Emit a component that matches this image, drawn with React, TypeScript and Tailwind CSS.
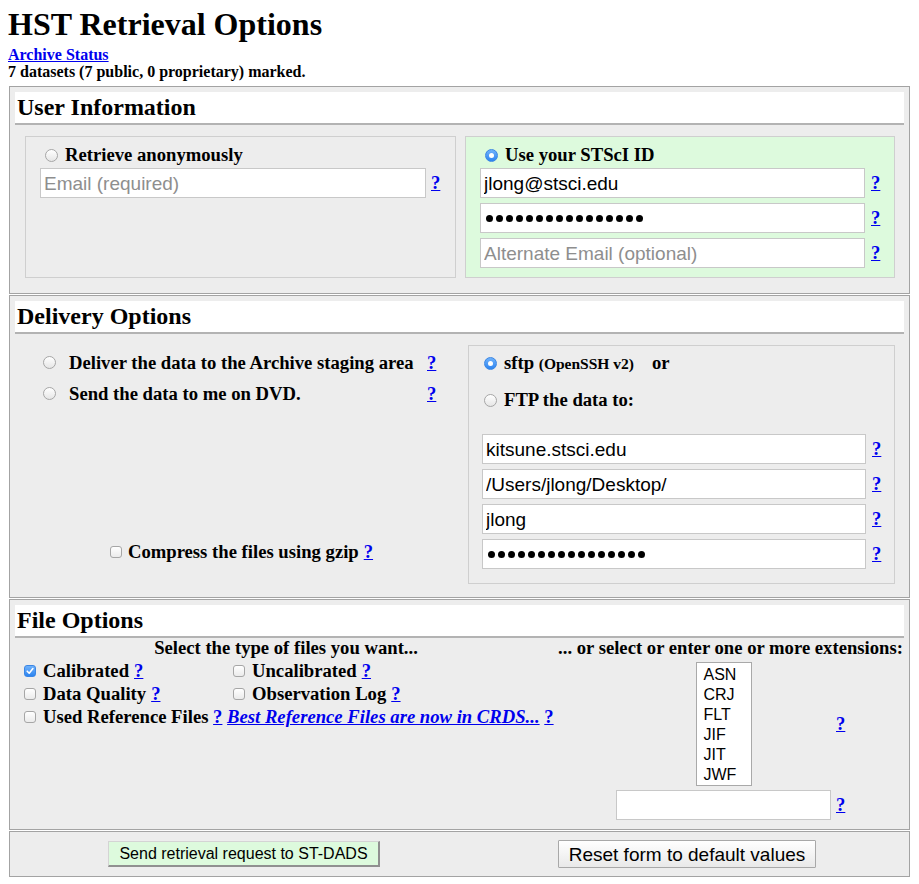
import React from "react"

const sans = "font-['Liberation_Sans',Arial,sans-serif]"

const Radio = ({ checked = false }: { checked?: boolean }) =>
  checked ? (
    <span className="inline-flex h-[13px] w-[13px] shrink-0 items-center justify-center rounded-full border border-[#3b86e4] bg-linear-to-b from-[#6fb2fb] to-[#2b84f0]">
      <span className="h-[5px] w-[5px] rounded-full bg-white" />
    </span>
  ) : (
    <span className="inline-block h-[13px] w-[13px] shrink-0 rounded-full border border-[#a6a6a6] bg-linear-to-b from-white to-[#e6e6e6]" />
  )

const Checkbox = ({ checked = false }: { checked?: boolean }) =>
  checked ? (
    <span className="inline-flex h-[12px] w-[12px] shrink-0 items-center justify-center rounded-[3px] border border-[#3b86e4] bg-linear-to-b from-[#6fb2fb] to-[#2b84f0]">
      <svg width="10" height="10" viewBox="0 0 10 10">
        <path d="M2.2 5.2 L4.2 7.2 L7.9 2.6" fill="none" stroke="white" strokeWidth="1.6" strokeLinecap="round" strokeLinejoin="round" />
      </svg>
    </span>
  ) : (
    <span className="inline-block h-[12px] w-[12px] shrink-0 rounded-[3px] border border-[#a6a6a6] bg-linear-to-b from-white to-[#ebebeb]" />
  )

const Help = ({ className = "" }: { className?: string }) => (
  <a href="#" className={`text-[18.67px] font-bold text-[#0000ee] underline ${className}`}>
    ?
  </a>
)

const TextBox = ({ value = "", placeholder = "", width }: { value?: string; placeholder?: string; width: string }) => (
  <input
    readOnly
    value={value}
    placeholder={placeholder}
    className={`h-[30px] ${width} border border-[#c8c8c8] bg-white px-[3px] pt-[2px] ${sans} text-[19px] text-black outline-none placeholder:text-[#8e8e8e]`}
  />
)

const Password = ({ width }: { width: string }) => (
  <div className={`flex h-[30px] ${width} items-center gap-[3px] border border-[#c8c8c8] bg-white pl-[5px]`}>
    {Array.from({ length: 16 }).map((_, i) => (
      <span key={i} className="h-[7px] w-[7px] rounded-full bg-black" />
    ))}
  </div>
)

const Section = ({ title, children }: { title: string; children: React.ReactNode }) => (
  <div className="border border-[#a3a3a3] bg-[#ededed] px-[5px] pt-[5px]">
    <div className="h-[33px] border-b-2 border-[#b3b3b3] bg-white pl-[2px] text-[24px] font-bold leading-[31px]">{title}</div>
    {children}
  </div>
)

const label = "text-[18.67px] font-bold leading-[24px]"

export default function App() {
  const extensions = ["ASN", "CRJ", "FLT", "JIF", "JIT", "JWF"]

  return (
    <div className="min-h-screen bg-white font-['Liberation_Serif',serif] text-black">
      <h1 className="ml-[8px] pt-[6px] text-[32px] font-bold leading-[36px]">HST Retrieval Options</h1>
      <div className="ml-[8px] mt-[4px] text-[16px] font-bold leading-[17px]">
        <a href="#" className="text-[#0000ee] underline">
          Archive Status
        </a>
        <div>7 datasets (7 public, 0 proprietary) marked.</div>
      </div>

      <div className="ml-[9px] mt-[6px] flex w-[901px] flex-col gap-[1px]">
        {/* user info */}
        <Section title="User Information">
          <div className="mt-[11px] flex gap-[9px] pb-[15px] pl-[10px]">
            <div className="h-[142px] w-[431px] border border-[#cfcfcf] pt-[5px]">
              <div className="flex h-[26px] items-center gap-[7px] pl-[19px]">
                <Radio />
                <span className={label}>Retrieve anonymously</span>
              </div>
              <div className="flex items-center gap-[5px] pl-[14px]">
                <TextBox placeholder="Email (required)" width="w-[386px]" />
                <Help />
              </div>
            </div>
            <div className="w-[430px] border border-[#cfcfcf] bg-[#ddfadd] pb-[9px] pt-[5px]">
              <div className="flex h-[26px] items-center gap-[7px] pl-[19px]">
                <Radio checked />
                <span className={label}>Use your STScI ID</span>
              </div>
              <div className="flex flex-col gap-[5px] pl-[14px]">
                <div className="flex items-center gap-[6px]">
                  <TextBox value="jlong@stsci.edu" width="w-[385px]" />
                  <Help />
                </div>
                <div className="flex items-center gap-[6px]">
                  <Password width="w-[385px]" />
                  <Help />
                </div>
                <div className="flex items-center gap-[6px]">
                  <TextBox placeholder="Alternate Email (optional)" width="w-[385px]" />
                  <Help />
                </div>
              </div>
            </div>
          </div>
        </Section>

        {/* delivery */}
        <Section title="Delivery Options">
          <div className="flex pb-[13px]">
            <div className="flex w-[445px] flex-col">
              <div className="mt-[13px]">
                <div className="flex h-[31px] items-center pl-[28px]">
                  <Radio />
                  <span className={`ml-[13px] w-[358px] ${label}`}>Deliver the data to the Archive staging area</span>
                  <Help />
                </div>
                <div className="flex h-[31px] items-center pl-[28px]">
                  <Radio />
                  <span className={`ml-[13px] w-[358px] ${label}`}>Send the data to me on DVD.</span>
                  <Help />
                </div>
              </div>
              <div className="flex-1" />
              <div className="mb-[20px] flex h-[24px] items-center justify-center pl-[8px]">
                <Checkbox />
                <span className={`ml-[6px] ${label}`}>Compress the files using gzip</span>
                <Help className="ml-[5px]" />
              </div>
            </div>
            <div className="ml-[8px] mt-[11px] w-[427px] border border-[#cfcfcf] pb-[14px]">
              <div className="flex h-[34px] items-center pl-[15px]">
                <Radio checked />
                <span className={`ml-[7px] ${label}`}>
                  sftp <span className="text-[15.5px]">(OpenSSH v2)</span>
                  <span className="ml-[18px]">or</span>
                </span>
              </div>
              <div className="flex h-[40px] items-center pl-[15px]">
                <Radio />
                <span className={`ml-[7px] ${label}`}>FTP the data to:</span>
              </div>
              <div className="mt-[14px] flex flex-col gap-[5px] pl-[13px]">
                <div className="flex items-center gap-[6px]">
                  <TextBox value="kitsune.stsci.edu" width="w-[384px]" />
                  <Help />
                </div>
                <div className="flex items-center gap-[6px]">
                  <TextBox value="/Users/jlong/Desktop/" width="w-[384px]" />
                  <Help />
                </div>
                <div className="flex items-center gap-[6px]">
                  <TextBox value="jlong" width="w-[384px]" />
                  <Help />
                </div>
                <div className="flex items-center gap-[6px]">
                  <Password width="w-[384px]" />
                  <Help />
                </div>
              </div>
            </div>
          </div>
        </Section>

        {/* file options */}
        <Section title="File Options">
          <div className="flex pb-[9px]">
            <div className="w-[542px]">
              <div className="h-[20px] text-center text-[18.67px] font-bold leading-[20px]">Select the type of files you want...</div>
              <div className="mt-[1px] grid grid-cols-[209px_1fr] pl-[9px]">
                <div className="flex h-[23px] items-center">
                  <Checkbox checked />
                  <span className={`ml-[7px] ${label}`}>Calibrated</span>
                  <Help className="ml-[5px]" />
                </div>
                <div className="flex h-[23px] items-center">
                  <Checkbox />
                  <span className={`ml-[7px] ${label}`}>Uncalibrated</span>
                  <Help className="ml-[5px]" />
                </div>
                <div className="flex h-[23px] items-center">
                  <Checkbox />
                  <span className={`ml-[7px] ${label}`}>Data Quality</span>
                  <Help className="ml-[5px]" />
                </div>
                <div className="flex h-[23px] items-center">
                  <Checkbox />
                  <span className={`ml-[7px] ${label}`}>Observation Log</span>
                  <Help className="ml-[5px]" />
                </div>
                <div className="col-span-2 flex h-[23px] items-center whitespace-nowrap">
                  <Checkbox />
                  <span className={`ml-[7px] ${label}`}>
                    Used Reference Files <Help />{" "}
                    <a href="#" className="italic text-[#0000ee] underline">
                      Best Reference Files are now in CRDS...
                    </a>{" "}
                    <Help />
                  </span>
                </div>
              </div>
            </div>
            <div className="flex-1">
              <div className="h-[20px] whitespace-nowrap text-center text-[18.67px] font-bold leading-[20px]">
                ... or select or enter one or more extensions:
              </div>
              <div className="ml-[59px] mt-[4px] grid grid-cols-[215px_auto] items-center gap-x-[5px] gap-y-[4px]">
                <div className="flex justify-center">
                  <div className={`w-[56px] border border-[#a9a9a9] bg-white pt-[2px] ${sans} text-[16px]`}>
                    {extensions.map((ext) => (
                      <div key={ext} className="h-[20px] pl-[7px] leading-[20px]">
                        {ext}
                      </div>
                    ))}
                  </div>
                </div>
                <Help />
                <TextBox width="w-[215px]" />
                <Help />
              </div>
            </div>
          </div>
        </Section>

        {/* buttons */}
        <div className="flex items-center border border-[#a3a3a3] bg-[#ededed] pb-[8px] pl-[98px] pt-[8px]">
          <button
            type="button"
            className={`h-[26px] w-[272px] border border-b-2 border-r-2 border-b-[#909090] border-l-[#d4d4d4] border-r-[#909090] border-t-[#d4d4d4] bg-[#ddfadd] ${sans} text-[16px] text-black`}
          >
            Send retrieval request to ST-DADS
          </button>
          <button
            type="button"
            className={`ml-[178px] h-[28px] w-[258px] rounded-[1px] border border-[#a8a8a8] bg-linear-to-b from-white to-[#e9e9e9] ${sans} text-[19px] text-black`}
          >
            Reset form to default values
          </button>
        </div>
      </div>
    </div>
  )
}
